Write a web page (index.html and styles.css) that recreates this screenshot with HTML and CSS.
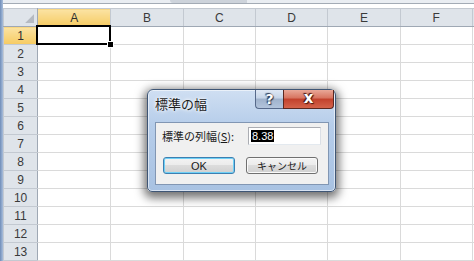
FILE: index.html
```html
<!DOCTYPE html>
<html lang="ja">
<head>
    <meta charset="UTF-8">
    <title>標準の幅</title>
    <link rel="stylesheet" href="styles.css">
</head>
<body>

    <div class="app">
        <div class="edge"></div>
        <div class="main">
            <div class="formula"><div class="formula-tab"></div></div>

            <table class="sheet">
                <colgroup>
                    <col class="c-head"><col class="c-a"><col class="c-std"><col class="c-std"><col class="c-std"><col class="c-std"><col class="c-std"><col class="c-rest">
                </colgroup>
                <tr class="head">
                    <th class="corner"><span class="select-all"></span></th>
                    <th class="sel">A</th><th>B</th><th>C</th><th>D</th><th>E</th><th>F</th><th></th>
                </tr>
                <tr><th class="sel">1</th><td class="active"><span class="handle"></span></td><td></td><td></td><td></td><td></td><td></td><td></td></tr>
                <tr><th>2</th><td></td><td></td><td></td><td></td><td></td><td></td><td></td></tr>
                <tr><th>3</th><td></td><td></td><td></td><td></td><td></td><td></td><td></td></tr>
                <tr><th>4</th><td></td><td></td><td></td><td></td><td></td><td></td><td></td></tr>
                <tr><th>5</th><td></td><td></td><td></td><td></td><td></td><td></td><td></td></tr>
                <tr><th>6</th><td></td><td></td><td></td><td></td><td></td><td></td><td></td></tr>
                <tr><th>7</th><td></td><td></td><td></td><td></td><td></td><td></td><td></td></tr>
                <tr><th>8</th><td></td><td></td><td></td><td></td><td></td><td></td><td></td></tr>
                <tr><th>9</th><td></td><td></td><td></td><td></td><td></td><td></td><td></td></tr>
                <tr><th>10</th><td></td><td></td><td></td><td></td><td></td><td></td><td></td></tr>
                <tr><th>11</th><td></td><td></td><td></td><td></td><td></td><td></td><td></td></tr>
                <tr><th>12</th><td></td><td></td><td></td><td></td><td></td><td></td><td></td></tr>
                <tr><th>13</th><td></td><td></td><td></td><td></td><td></td><td></td><td></td></tr>
            </table>
        </div>
    </div>

    <!-- 標準の幅 dialog -->
    <div class="dialog">
        <div class="titlebar">
            <span class="title">標準の幅</span>
            <div class="caption-btns">
                <span class="cap-btn help">?</span>
                <span class="cap-btn close">x</span>
            </div>
        </div>
        <div class="client">
            <div class="row">
                <label class="label">標準の列幅(<u>S</u>):</label>
                <div class="input"><span class="selected">8.38</span></div>
            </div>
            <div class="row buttons">
                <span class="btn default">OK</span>
                <span class="btn">キャンセル</span>
            </div>
        </div>
    </div>

</body>
</html>
```

FILE: styles.css
```css
/* General Styles */
body {
    margin: 0;
    width: 474px;
    height: 261px;
    overflow: hidden;
    background-color: #ffffff;
    font-family: "Liberation Sans", "Noto Sans CJK JP", sans-serif;
}

.app {
    display: flex;
    height: 261px;
}

.edge {
    width: 3px;
    flex-shrink: 0;
    background: linear-gradient(to right, #6f8db9, #a9bedb);
}

.main {
    flex: 1;
    overflow: hidden;
}

/* formula bar bottom */
.formula {
    height: 3px;
    background-color: #e9edf2;
    border-bottom: 1px solid #a3abb5;
    margin-bottom: 4px;
}

.formula-tab {
    margin-left: 167px;
    width: 77px;
    height: 3px;
    background-color: #cdd3db;
    border-bottom-left-radius: 6px;
}

/* Sheet */
.sheet {
    border-collapse: collapse;
    table-layout: fixed;
    width: 480px;
}

.c-head { width: 34px; }
.c-a { width: 73px; }
.c-std { width: 72px; }
.c-rest { width: 10px; }

.sheet tr {
    height: 18px;
}

.sheet th {
    padding: 0;
    font-weight: normal;
    font-size: 12px;
    color: #3a3a3a;
    background-color: #dfe4ea;
    border: 1px solid #c3c9d1;
    text-align: center;
    line-height: 16px;
}

.sheet tr.head th {
    border-bottom: 1px solid #9fa8b4;
}

.sheet tr th:first-child {
    border-right: 1px solid #9fa8b4;
}

.sheet th.sel {
    background: linear-gradient(#fbe3a3, #f6cb62);
    color: #2e2e2e;
}

.sheet td {
    padding: 0;
    border: 1px solid #dadada;
}

.corner {
    position: relative;
}

.select-all {
    position: absolute;
    right: 3px;
    bottom: 3px;
    width: 9px;
    height: 9px;
    background-color: #b5bac2;
    clip-path: polygon(100% 0, 100% 100%, 0 100%);
}

td.active {
    position: relative;
}

td.active::before {
    content: "";
    position: absolute;
    left: -2px;
    top: -2px;
    right: -1px;
    bottom: -1px;
    border: 2px solid #000000;
}

.handle {
    position: absolute;
    right: -4px;
    bottom: -4px;
    width: 5px;
    height: 5px;
    background-color: #000000;
    border: 1px solid #ffffff;
    z-index: 1;
}

/* Dialog */
.dialog {
    position: absolute;
    left: 147px;
    top: 89px;
    width: 189px;
    height: 103px;
    box-sizing: border-box;
    border: 1px solid #3f5675;
    border-radius: 6px 6px 5px 5px;
    background: linear-gradient(#cfdff2, #b6cdea 35%, #a8c2e2);
    box-shadow: 0 3px 10px 3px rgba(0, 0, 0, 0.55), inset 0 0 0 1px rgba(255, 255, 255, 0.55);
    display: flex;
    flex-direction: column;
    font-family: "Noto Sans CJK JP", sans-serif;
}

.titlebar {
    display: flex;
    height: 32px;
    flex-shrink: 0;
}

.title {
    padding: 6px 0 0 7px;
    font-size: 13px;
    line-height: 15px;
    color: #1c1c1c;
    text-shadow: 0 0 5px #ffffff, 0 0 3px #ffffff;
}

.caption-btns {
    margin-left: auto;
    margin-right: 1px;
    display: flex;
    height: 19px;
}

.cap-btn {
    display: flex;
    align-items: center;
    justify-content: center;
    box-sizing: border-box;
    height: 19px;
    font-family: "DejaVu Sans", sans-serif;
    font-weight: bold;
    color: #ffffff;
}

.help {
    width: 28px;
    font-size: 14px;
    border: 1px solid #56698a;
    border-top: none;
    border-right: none;
    border-bottom-left-radius: 4px;
    background: linear-gradient(#dfe8f4, #c4d3e7 45%, #9fb2cc 50%, #b2c4dc);
    text-shadow: 0 0 1px #2c3b55, 1px 1px 1px #2c3b55, -1px -1px 1px #2c3b55;
}

.close {
    width: 51px;
    font-size: 15px;
    line-height: 15px;
    padding-bottom: 2px;
    border: 1px solid #5c2820;
    border-top: none;
    border-bottom-right-radius: 4px;
    background: linear-gradient(#e9a898, #d7735f 45%, #c2412c 50%, #d4634b);
    text-shadow: 0 0 1px #4a1710, 1px 1px 1px #4a1710, -1px -1px 1px #4a1710;
}

.client {
    flex: 1;
    margin: 0 6px 6px 7px;
    background-color: #f0f0f0;
    border: 1px solid #8196b3;
    padding: 4px 7px 0 6px;
}

.row {
    display: flex;
    align-items: center;
    height: 18px;
}

.label {
    font-size: 11px;
    color: #1a1a1a;
}

.input {
    margin-left: auto;
    box-sizing: border-box;
    width: 73px;
    height: 18px;
    display: flex;
    align-items: center;
    background-color: #ffffff;
    border: 1px solid #abadb3;
    border-bottom-color: #e3e9ef;
    border-right-color: #dbdfe6;
    padding-left: 2px;
    font-size: 11px;
    line-height: 12px;
}

.selected {
    background-color: #000000;
    color: #ffffff;
    font-family: "Liberation Sans", sans-serif;
    font-size: 11px;
    line-height: 12px;
    padding: 0 1px;
}

.buttons {
    margin-top: 12px;
    padding-left: 1px;
    gap: 11px;
    height: 17px;
}

.btn {
    box-sizing: border-box;
    width: 72px;
    height: 17px;
    display: flex;
    align-items: center;
    justify-content: center;
    font-size: 10px;
    color: #1a1a1a;
    border: 1px solid #707070;
    border-radius: 3px;
    background: linear-gradient(#f3f3f3, #ebebeb 50%, #dcdcdc 50%, #d0d0d0);
    box-shadow: inset 0 0 0 1px #fafafa;
}

.btn.default {
    border-color: #3c7fb1;
    box-shadow: inset 0 0 0 1px #6fd0f6;
    font-family: "Liberation Sans", sans-serif;
    font-size: 11px;
}
```
